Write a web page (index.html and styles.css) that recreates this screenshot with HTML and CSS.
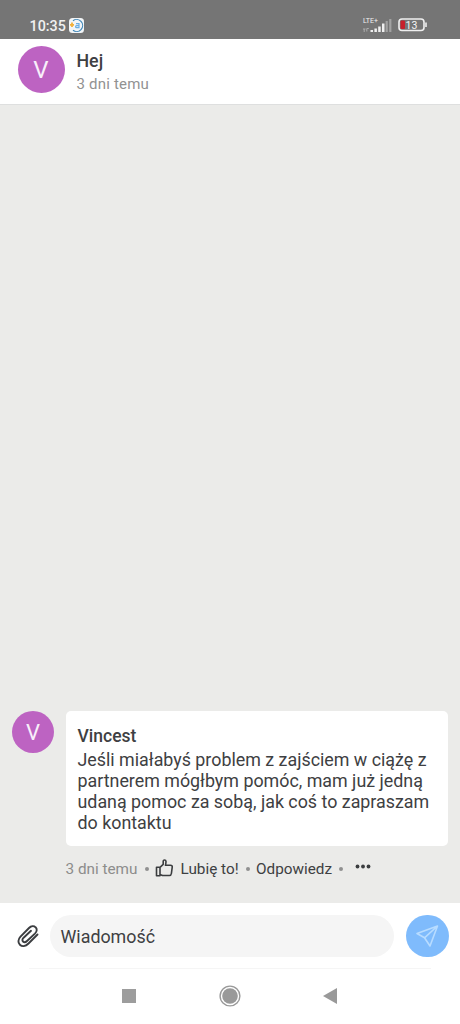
FILE: index.html
```html
<!DOCTYPE html>
<html lang="pl">
<head>
<meta charset="utf-8">
<title>Hej</title>
<link rel="stylesheet" href="styles.css">
</head>
<body>
<div class="screen">
  <div class="status">
    <span class="clock">10:35</span>
    <svg class="app-badge" width="15" height="15" viewBox="0 0 15 15">
      <rect width="15" height="15" rx="3.5" fill="#f2f5f7"/>
      <path d="M4 2.700a6 6 0 1 1 0 9.600" fill="none" stroke="#3f86b8" stroke-width="1.200"/>
      <path d="M3 4.500v4.500M1 6.800h4" stroke="#f3b13c" stroke-width="1.800"/>
      <path d="M7 5.700h3v4H7.600a1 1 0 0 1 0-2H10" fill="none" stroke="#69aee6" stroke-width="1.200"/>
    </svg>
    <div class="network">
      <span class="lte">LTE+</span>
      <svg class="signal" width="30" height="14" viewBox="0 0 30 14">
        <path d="M8.500 11h2.500v2H8.500zM12.400 9.500h2.500V13h-2.500zM16.200 7.500h2.500V13h-2.500zM20 4.500h2.500V13H20z" fill="#f0f0f0"/>
        <path d="M23.600 2h2.200v11h-2.200zM27.200 0h2.200v13h-2.200z" fill="#a2a2a2"/>
        <path d="M1 10h2.500M2.200 10v3M4.800 12.500V9.500h2" fill="none" stroke="#adadad"/>
      </svg>
    </div>
    <svg class="battery" width="30" height="14" viewBox="0 0 30 14">
      <rect x="1" y="1" width="25" height="11.500" rx="3" fill="none" stroke="#efefef" stroke-width="1.600"/>
      <rect x="2.500" y="2.500" width="4.500" height="8.500" rx="1" fill="#c6202b"/>
      <path d="M28 4.500v4.500" stroke="#efefef" stroke-width="1.600"/>
      <text class="battery-text" x="13.500" y="10.600" text-anchor="middle">13</text>
    </svg>
  </div>

  <header class="header">
    <div class="avatar avatar-large">V</div>
    <div class="heading">
      <div class="title">Hej</div>
      <div class="subtitle">3 dni temu</div>
    </div>
  </header>

  <main class="chat">
    <div class="message">
      <div class="avatar avatar-small">V</div>
      <div class="message-body">
        <div class="bubble">
          <div class="author">Vincest</div>
          <div class="text">Jeśli miałabyś problem z zajściem w ciążę z<br>partnerem mógłbym pomóc, mam już jedną<br>udaną pomoc za sobą, jak coś to zapraszam<br>do kontaktu</div>
        </div>
        <div class="actions">
          <span class="time">3 dni temu</span>
          <i class="dot"></i>
          <svg class="thumb" width="18" height="18" viewBox="0 0 18 18" fill="none" stroke="#3b3d3f" stroke-width="1.600" stroke-linejoin="round" stroke-linecap="round">
            <path d="M1.500 8.300H5V16.700H1.500zM5 8.300 8.200 5.300V2.200C8.200.5 10.800.5 11 2.300c0 1.600-.2 2.700-.5 4h5c1.300 0 1.900.8 1.700 2l-.8 6.200c-.2 1.400-.8 2-2 2H7.500L5 15.500"/>
          </svg>
          <span class="like">Lubię to!</span>
          <i class="dot"></i>
          <span class="reply">Odpowiedz</span>
          <i class="dot"></i>
          <svg class="more" width="16" height="5" viewBox="0 0 16 5" fill="#3b3d3f"><circle cx="2.500" cy="2.500" r="1.900"/><circle cx="8" cy="2.500" r="1.900"/><circle cx="13.500" cy="2.500" r="1.900"/></svg>
        </div>
      </div>
    </div>
  </main>

  <div class="composer">
    <svg class="clip" width="24" height="26" viewBox="0 0 24 26" fill="none" stroke="#3b3d40" stroke-width="1.900" stroke-linecap="round" stroke-linejoin="round">
      <path d="M20.500 11.500 11.500 20.500C8.500 23.500 5 23.600 2.900 21.700S.9 16.500 3.500 13.700L12 5c2.200-2.200 5-2.300 6.600-.7 1.700 1.600 1.500 4.100-.7 6.300L10 18c-1.300 1.300-3 1.500-4 .5s-.7-2.500.6-3.800L14 7.800"/>
    </svg>
    <div class="field">Wiadomość</div>
    <div class="send">
      <svg width="24" height="24" viewBox="0 0 24 24" fill="none" stroke="#b8dcff" stroke-width="1.600" stroke-linejoin="round">
        <path d="M22.500 2 2 9.500l7.500 4.300L15 22ZM22.500 2 9.500 13.800"/>
      </svg>
    </div>
  </div>
  <div class="divider"></div>
  <nav class="nav">
    <svg width="14" height="14" viewBox="0 0 14 14"><path d="M0 0h14v14H0z" fill="#9d9d9d"/></svg>
    <svg width="22" height="22" viewBox="0 0 22 22"><circle cx="11" cy="11" r="9.900" fill="none" stroke="#999" stroke-width="1.400"/><circle cx="11" cy="11" r="7.800" fill="#999"/></svg>
    <svg width="14" height="16" viewBox="0 0 14 16"><path d="M0 8 14 0v16z" fill="#999"/></svg>
  </nav>
</div>
</body>
</html>
```

FILE: styles.css
```css
* { box-sizing: border-box; }
body { margin: 0; font-family: Roboto, "Noto Sans", sans-serif; color: #3e4042; background: #fff; }
svg { display: block; flex: none; }
.screen { width: 460px; height: 1024px; display: flex; flex-direction: column; overflow: hidden; white-space: nowrap; }
.status { flex: none; height: 39px; background: #757575; display: flex; align-items: flex-start; padding: 0 32px 0 29.500px; color: #f1f1f1; }
.clock { font-size: 14.300px; line-height: 18px; font-weight: 500; margin-top: 17px; width: 36px; }
.app-badge { margin: 18px 0 0 3px; }
.network { margin: 18px 6px 0 auto; width: 30px; height: 16px; display: flex; flex-direction: column; }
.lte { font-size: 7px; line-height: 6px; height: 1px; padding-left: 1px; }
.signal { flex: none; }
.battery { margin-top: 18px; }
.battery-text { font-size: 10.500px; font-weight: 400; fill: #f5f5f5; }
.header { flex: none; height: 66px; border-bottom: 1px solid #dedfdf; padding: 6.500px 17.500px; display: flex; gap: 12px; }
.avatar { flex: none; border-radius: 50%; background: #bd63c2; color: #f8effa; display: flex; align-items: center; justify-content: center; }
.avatar-large { width: 47px; height: 47px; font-size: 24px; padding-top: 2px; }
.avatar-small { width: 42px; height: 42px; font-size: 22px; padding-top: 1px; }
.title { font-size: 17.800px; font-weight: 500; line-height: 22px; margin-top: 4.500px; }
.subtitle { font-size: 15px; line-height: 20px; color: #929292; margin-top: 1.500px; letter-spacing: .2px; }
.chat { flex: 1; background: #ebebe9; padding: 0 12px 17.500px; display: flex; flex-direction: column; justify-content: flex-end; }
.message { display: flex; gap: 12px; height: 175px; }
.message-body { width: 383px; margin-left: -.5px; }
.bubble { height: 135px; background: #fff; border-radius: 5px; padding: 14px 12px; }
.author { font-size: 17.500px; line-height: 22px; font-weight: 500; }
.text { font-size: 17.850px; line-height: 21px; margin-top: 2.500px; }
.actions { display: flex; align-items: center; height: 20px; margin-top: 13px; font-size: 15.300px; }
.time { color: #8d8d8c; width: 73px; }
.dot { flex: none; width: 4px; height: 4px; border-radius: 50%; background: #909090; margin: 0 6px; }
.like { width: 59.500px; margin-left: 8px; }
.reply { width: 77px; }
.more { margin: -4px 0 0 6px; }
.thumb { margin-top: -1px; }
.composer { flex: none; height: 65px; padding: 11px 11.500px 10px 17px; display: flex; align-items: center; }
.clip { margin-right: 8.500px; }
.field { width: 344.500px; height: 42px; border-radius: 21px; background: #f5f5f5; font-size: 17.850px; line-height: 43px; padding-left: 11px; }
.send { width: 42.500px; height: 42.500px; border-radius: 50%; background: #7fbbfc; margin-left: auto; display: grid; place-items: center; }
.divider { flex: none; height: 1px; width: 402px; margin: 0 auto; background: #f5f5f5; }
.nav { flex: none; height: 55px; padding: 0 123px 1px 122px; display: flex; align-items: center; justify-content: space-between; }
```
